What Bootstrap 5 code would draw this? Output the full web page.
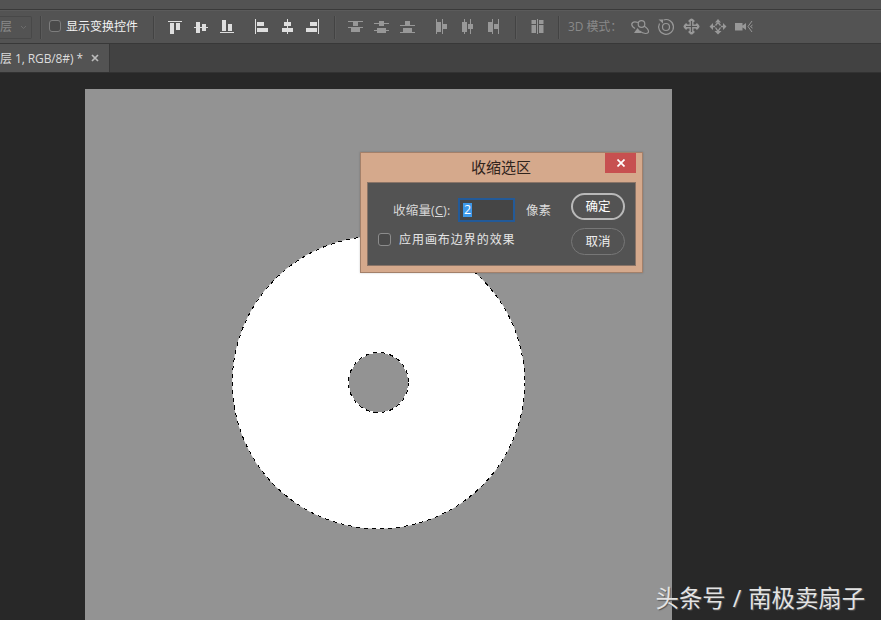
<!DOCTYPE html>
<html lang="zh-CN">
<head>
<meta charset="utf-8">
<meta name="viewport" content="width=device-width, initial-scale=1">
<title>收缩选区</title>
<link href="https://cdn.jsdelivr.net/npm/bootstrap@5.3.0/dist/css/bootstrap.min.css" rel="stylesheet">
<style>
body{width:881px;height:620px;background:#282828;color:#e6e6e6;font:12px/16px "Open Sans","Noto Sans CJK SC",sans-serif;white-space:nowrap}
.menu-strip{height:10px;background:#535353;border-bottom:1px solid #3a3a3a}
.options-bar{height:34px;background:#535353;border-top:1px solid #5b5b5b;border-bottom:1px solid #383838}
.layer-select{width:32px;height:23px;border:1px solid #484848;border-left:0;border-radius:0 2px 2px 0;color:#8a8a8a}
.divider{width:2px;height:23px;background:#434343;border-right:1px solid #5a5a5a}
.box{width:13px;height:13px;border:1px solid #8c8c8c;border-radius:3px;background:#4a4a4a}
.options-bar .box{width:12px;height:12px;margin:0 0 2px 7px;border-color:#7d7d7d}
.transform-label{width:87px;padding-left:5px;color:#f2f2f2}
.tools{color:#dedede;margin-left:8px}
.tools.off{color:#989898}
.mode-label{width:59px;color:#898989;margin-left:8px;letter-spacing:-.1px}
.tabs-bar{height:29px;background:#424242;border-bottom:1px solid #323232}
.doc-tab{width:110px;background:#535353;border-right:1px solid #383838;color:#dcdcdc}
.doc-name{width:91px;letter-spacing:-.1px;padding-top:1px}
.workspace{height:547px;padding:16px 0 0 85px}
.artboard{width:587px;height:531px;background:#939393}
.shrink-dialog{left:360px;top:152px;width:283px;height:121px;background:#d5a98c;border:1px solid #a3806a;padding:0 6px 6px;box-shadow:0 0 2px #0003}
.dialog-title{height:29px;color:#30241d;font-size:15px;line-height:29px;padding-right:1px}
.close-btn{right:6px;top:0;width:31px;height:20px;background:#c75050}
.dialog-main{height:84px;background:#535353;border:1px solid #8a7467;padding:10px 10px 0}
.fields{width:193px}
.amount-row{height:34px;padding-left:15px}
.amount-label{width:65px;color:#d8d8d8;font-size:12.5px;letter-spacing:.2px;padding-top:1px}
.amount{width:57px;height:24px;border:2px solid #235a98;background:#454545;padding-left:3px}
.amount span{background:#3d98e8;color:#fff;padding:0 1px;line-height:14px;font-size:12.5px}
.unit{padding:1px 0 0 11px;font-size:12.5px;color:#dcdcdc}
.edge-label{padding:1px 0 0 8px;letter-spacing:.95px}
.pill{width:54px;height:27px;border:1px solid #777;border-radius:14px;color:#eee;background:transparent;font-size:12.5px;line-height:16px;padding:0}
.pill.main-choice{border:2px solid #b9b9b9;color:#fff}
.watermark{left:655.5px;top:582px;color:#e3e3e3;font-size:23.4px;line-height:32px;text-shadow:1px 1px 1px #555;word-spacing:.9px}
</style>
<script src="https://cdn.jsdelivr.net/npm/bootstrap@5.3.0/dist/js/bootstrap.bundle.min.js"></script>
</head>
<body class="m-0 overflow-hidden position-relative">
<div class="menu-strip"></div>
<div class="options-bar d-flex align-items-center">
  <div class="layer-select d-flex align-items-center justify-content-between pe-1"><span>层</span><svg width="7" height="5" fill="none" stroke="#6c6c6c"><path d="M1 1l2.500 2.500L6 1"/></svg></div>
  <div class="divider" style="margin-left:8px"></div>
  <div class="box"></div><div class="transform-label">显示变换控件</div>
  <div class="divider" style="margin-left:5px"></div>
  <div class="tools d-flex" style="margin-left:7px">
    <svg width="26" height="24" viewBox="162 15 26 24" fill="currentColor"><path d="M168 21h14v1h-14zM170 23h4v11h-4zM176 23h4v7h-4z"/></svg>
    <svg width="26" height="24" viewBox="188 15 26 24" fill="currentColor"><path d="M194 27h14v1h-14zM196 22h4v11h-4zM202 24h4v7h-4z"/></svg>
    <svg width="26" height="24" viewBox="214 15 26 24" fill="currentColor"><path d="M220 32h14v1h-14zM222 20h4v11h-4zM228 24h4v7h-4z"/></svg>
  </div>
  <div class="tools d-flex">
    <svg width="26" height="24" viewBox="248 15 26 24" fill="currentColor"><path d="M255 19h1v15h-1zM257 22h7v4h-7zM257 28h11v4h-11z"/></svg>
    <svg width="26" height="24" viewBox="274 15 26 24" fill="currentColor"><path d="M287 19h1v15h-1zM284 22h7v4h-7zM282 28h11v4h-11z"/></svg>
    <svg width="26" height="24" viewBox="300 15 26 24" fill="currentColor"><path d="M318 19h1v15h-1zM310 22h7v4h-7zM306 28h11v4h-11z"/></svg>
  </div>
  <div class="divider" style="margin-left:8px"></div>
  <div class="tools off d-flex" style="margin-left:6px">
    <svg width="26" height="24" viewBox="342 15 26 24" fill="currentColor"><path d="M348 21h15v1h-15zM353 22h5v4h-5zM348 27h15v1h-15zM351 28h9v4h-9z"/></svg>
    <svg width="26" height="24" viewBox="368 15 26 24" fill="currentColor"><path d="M374 23h15v1h-15zM379 21h5v5h-5zM374 30h15v1h-15zM377 28h9v5h-9z"/></svg>
    <svg width="26" height="24" viewBox="394 15 26 24" fill="currentColor"><path d="M400 25h15v1h-15zM405 21h5v4h-5zM400 32h15v1h-15zM403 28h9v4h-9z"/></svg>
  </div>
  <div class="tools off d-flex">
    <svg width="26" height="24" viewBox="428 15 26 24" fill="currentColor"><path d="M436 19h1v15h-1zM437 22h4v10h-4zM442 19h1v15h-1zM443 24h4v5h-4z"/></svg>
    <svg width="26" height="24" viewBox="454 15 26 24" fill="currentColor"><path d="M464 19h1v15h-1zM462 22h5v10h-5zM470 19h1v15h-1zM468 24h5v5h-5z"/></svg>
    <svg width="26" height="24" viewBox="480 15 26 24" fill="currentColor"><path d="M492 19h1v15h-1zM488 22h4v10h-4zM498 19h1v15h-1zM494 24h4v5h-4z"/></svg>
  </div>
  <div class="divider" style="margin-left:9px"></div>
  <div class="tools off d-flex" style="margin-left:7px">
    <svg width="26" height="24" viewBox="524 15 26 24" fill="currentColor"><path d="M531.500 20h4.500v4h-4.500zM531.500 25h4.500v8h-4.500zM537 19h1v15h-1zM539 20h4.500v4H539zM539 25h4.500v8H539z"/></svg>
  </div>
  <div class="divider" style="margin-left:8px"></div>
  <div class="mode-label">3D 模式：</div>
  <div class="tools off d-flex m-0">
    <svg width="26" height="24" viewBox="627 15 26 24" fill="none" stroke="currentColor" stroke-width="1.200"><circle cx="641.500" cy="24" r="3.300"/><path d="M638 22.500c-5-2-8 1-5 4.500l2 1.500M639.500 31c4 3 9 3.500 9 .5 0-2-2-4-4.500-5.500"/><path d="M634 33l3.500-5 4 5z" fill="currentColor" stroke="none"/></svg>
    <svg width="26" height="24" viewBox="653 15 26 24" fill="none" stroke="currentColor" stroke-width="1.200"><circle cx="666" cy="27" r="3.500"/><path d="M663.500 20a7.400 7.400 0 1 1-4 3.500"/><path d="M658.500 19.500h4.500v4z" fill="currentColor" stroke="none"/></svg>
    <svg width="26" height="24" viewBox="679 15 26 24" fill="none"><path d="M691.500 21.500v10M686.500 26.500h10M689.500 22.500l2-2 2 2M689.500 30.500l2 2 2-2M687.500 24.500l-2 2 2 2M695.500 24.500l2 2-2 2" stroke="currentColor" stroke-width="4" stroke-linejoin="round"/><path d="M691.500 21v11M686 26.500h11" stroke="#535353" stroke-width="1.200"/></svg>
    <svg width="26" height="24" viewBox="705 15 26 24" fill="currentColor"><path d="M715 22.500l3-3.500 3 3.500zM714.500 31h7L718 34.500zM713 23v7l-3.500-3.500zM723 23l3.500 3.500L723 30z"/><path d="M713 26.500h2M721 26.500h2M715.500 25.500l2-2.500h1l2 2.500M715.500 27.500l2 3h1l2-3" fill="none" stroke="currentColor" stroke-width="1.300"/></svg>
    <svg width="26" height="24" viewBox="731 15 26 24"><path d="M735 23h7.500v7.500H735zM742 26l4-3v7l-4-3z" fill="currentColor"/><path d="M752 21l-4 5.500 4 5.500M752.500 25l-2 1.500 2 1.500" fill="none" stroke="currentColor"/></svg>
  </div>
</div>
<div class="tabs-bar d-flex">
  <div class="doc-tab d-flex align-items-center"><span class="doc-name">层 1, RGB/8#) *</span><svg width="8" height="8" fill="none" stroke="#bbb" stroke-width="1.700"><path d="M1 1l6 6M7 1L1 7"/></svg></div>
</div>
<main class="workspace">
  <svg class="artboard d-block" viewBox="85 89 587 531">
    <circle cx="378.500" cy="382.500" r="146.500" fill="#fff"/>
    <circle cx="378.500" cy="382.500" r="146.200" fill="none" stroke="#000" stroke-dasharray="4 4" shape-rendering="crispEdges"/>
    <circle cx="378.500" cy="382.500" r="30" fill="#939393"/>
    <circle cx="378.500" cy="382.500" r="30" fill="none" stroke="#fff" shape-rendering="crispEdges"/>
    <circle cx="378.500" cy="382.500" r="30" fill="none" stroke="#000" stroke-dasharray="4 4" shape-rendering="crispEdges"/>
  </svg>
</main>
<section class="shrink-dialog position-absolute">
  <div class="dialog-title text-center">收缩选区</div>
  <div class="close-btn position-absolute d-flex align-items-center justify-content-center"><svg width="8" height="8" fill="none" stroke="#fff" stroke-width="1.700"><path d="M.5.5l7 7M7.500.5l-7 7"/></svg></div>
  <div class="dialog-main d-flex">
    <div class="fields">
      <div class="amount-row d-flex align-items-center"><div class="amount-label">收缩量(<u>C</u>):</div><div class="amount d-flex align-items-center"><span>2</span></div><div class="unit">像素</div></div>
      <div class="d-flex align-items-center mt-1"><div class="box"></div><div class="edge-label">应用画布边界的效果</div></div>
    </div>
    <div class="d-flex flex-column gap-2">
      <button class="pill main-choice" type="button">确定</button>
      <button class="pill" type="button">取消</button>
    </div>
  </div>
</section>
<div class="watermark position-absolute">头条号 / 南极卖扇子</div>
</body>
</html>
